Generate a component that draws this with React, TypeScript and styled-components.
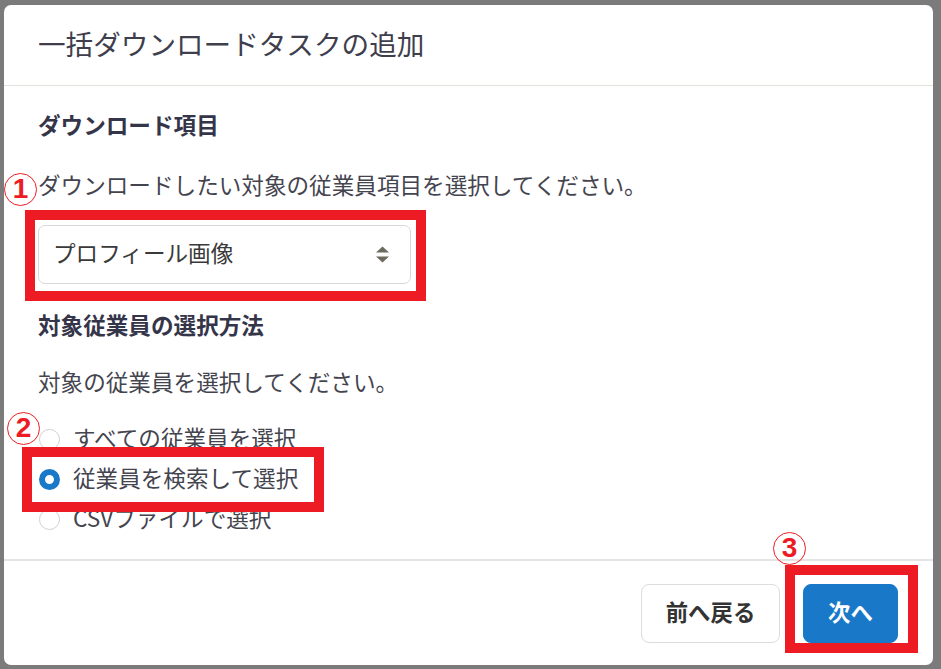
import React from "react";
import styled, { createGlobalStyle } from "styled-components";

const Global = createGlobalStyle`
  html, body { margin: 0; padding: 0; }
  body {
    background: #7b7b7b;
    font-family: "Noto Sans CJK JP", "Noto Sans", sans-serif;
  }
`;

const Page = styled.div`
  position: relative;
  width: 941px;
  height: 669px;
  overflow: hidden;
  background: #7b7b7b;
  padding: 5px 0 0 4px;
  box-sizing: border-box;
`;

const Modal = styled.div`
  width: 929px;
  height: 660px;
  background: #fff;
  border-radius: 7px;
  display: flex;
  flex-direction: column;
  overflow: hidden;
`;

const Header = styled.div`
  height: 81px;
  border-bottom: 1px solid #e2e2dc;
  display: flex;
  align-items: center;
  padding: 0 0 4px 34px;
  box-sizing: border-box;
  flex-shrink: 0;
`;

const Title = styled.h1`
  margin: 0;
  font-size: 27.6px;
  font-weight: 400;
  color: #3e3e4c;
  line-height: 36px;
`;

const Body = styled.div`
  flex: 1;
  padding: 23px 34px 0;
  display: flex;
  flex-direction: column;
`;

const SectionTitle = styled.div<{ $mt?: number }>`
  font-size: 22.6px;
  font-weight: 700;
  color: #35354a;
  line-height: 32px;
  margin-top: ${(p) => p.$mt ?? 0}px;
`;

const Desc = styled.div<{ $mt: number }>`
  font-size: 22.6px;
  color: #44444f;
  line-height: 32px;
  margin-top: ${(p) => p.$mt}px;
`;

const Select = styled.div`
  margin-top: 24px;
  width: 373px;
  height: 59px;
  box-sizing: border-box;
  border: 1px solid #d8d8d8;
  border-radius: 7px;
  display: flex;
  align-items: center;
  justify-content: space-between;
  padding: 0 20px 0 14px;
  font-size: 22.6px;
  color: #3a3a3a;
`;

const SelectValue = styled.span`
  margin-bottom: 4px;
`;

const RadioList = styled.div`
  margin-top: 21px;
  display: flex;
  flex-direction: column;
`;

const RadioRow = styled.label`
  height: 40px;
  display: flex;
  align-items: center;
  gap: 13px;
  font-size: 22.6px;
  color: #44444f;
  padding-left: 1px;
`;

const RadioLabel = styled.span`
  margin-bottom: 3px;
`;

const RadioDot = styled.span<{ $checked?: boolean }>`
  width: 21px;
  height: 21px;
  box-sizing: border-box;
  border-radius: 50%;
  border: ${(p) => (p.$checked ? "6.5px solid #1a78c8" : "1px solid #cfcfcf")};
  background: #fff;
  flex-shrink: 0;
`;

const Footer = styled.div`
  height: 106px;
  flex-shrink: 0;
  border-top: 2px solid #e4e4e4;
  display: flex;
  justify-content: flex-end;
  align-items: flex-start;
  padding: 23px 35px 0 0;
  gap: 23px;
  box-sizing: border-box;
`;

const Button = styled.button<{ $primary?: boolean }>`
  height: 59px;
  box-sizing: border-box;
  border-radius: 8px;
  font-family: inherit;
  font-size: 22.4px;
  font-weight: 700;
  padding: 0 0 5px;
  border: 1px solid ${(p) => (p.$primary ? "#1a78c8" : "#dcdcdc")};
  background: ${(p) => (p.$primary ? "#1a78c8" : "#fff")};
  color: ${(p) => (p.$primary ? "#fff" : "#333")};
  width: ${(p) => (p.$primary ? "95px" : "139px")};
`;

const Highlight = styled.div<{ $x: number; $y: number; $w: number; $h: number }>`
  position: absolute;
  left: ${(p) => p.$x}px;
  top: ${(p) => p.$y}px;
  width: ${(p) => p.$w}px;
  height: ${(p) => p.$h}px;
  border: 10px solid #ed1c24;
  box-sizing: border-box;
  pointer-events: none;
`;

const Marker = styled.div<{ $x: number; $y: number }>`
  position: absolute;
  left: ${(p) => p.$x}px;
  top: ${(p) => p.$y}px;
  width: 33px;
  height: 33px;
  box-sizing: border-box;
  border: 1.5px solid #ed1c24;
  border-radius: 50%;
  color: #ed1c24;
  font-family: "Liberation Sans", Arial, sans-serif;
  font-weight: 700;
  font-size: 28px;
  line-height: 30px;
  text-align: center;
`;

const SortIcon = () => (
  <svg width="15" height="17" viewBox="0 0 15 17">
    <path d="M7.5 0.5 L14 6.5 L1 6.5 Z" fill="#6b6a5c" />
    <path d="M7.5 16.5 L14 10.5 L1 10.5 Z" fill="#6b6a5c" />
  </svg>
);

export default function App() {
  return (
    <Page>
      <Global />
      <Modal>
        <Header>
          <Title>一括ダウンロードタスクの追加</Title>
        </Header>
        <Body>
          <SectionTitle>ダウンロード項目</SectionTitle>
          <Desc $mt={28}>ダウンロードしたい対象の従業員項目を選択してください。</Desc>
          <Select>
            <SelectValue>プロフィール画像</SelectValue>
            <SortIcon />
          </Select>
          <SectionTitle $mt={25}>対象従業員の選択方法</SectionTitle>
          <Desc $mt={25}>対象の従業員を選択してください。</Desc>
          <RadioList>
            <RadioRow>
              <RadioDot />
              <RadioLabel>すべての従業員を選択</RadioLabel>
            </RadioRow>
            <RadioRow>
              <RadioDot $checked />
              <RadioLabel>従業員を検索して選択</RadioLabel>
            </RadioRow>
            <RadioRow>
              <RadioDot />
              <RadioLabel>CSVファイルで選択</RadioLabel>
            </RadioRow>
          </RadioList>
        </Body>
        <Footer>
          <Button>前へ戻る</Button>
          <Button $primary>次へ</Button>
        </Footer>
      </Modal>
      <Highlight $x={25} $y={210} $w={401} $h={91} />
      <Highlight $x={22} $y={447} $w={302} $h={65} />
      <Highlight $x={785} $y={565} $w={133} $h={88} />
      <Marker $x={4} $y={173}>1</Marker>
      <Marker $x={7} $y={412}>2</Marker>
      <Marker $x={773} $y={532}>3</Marker>
    </Page>
  );
}
